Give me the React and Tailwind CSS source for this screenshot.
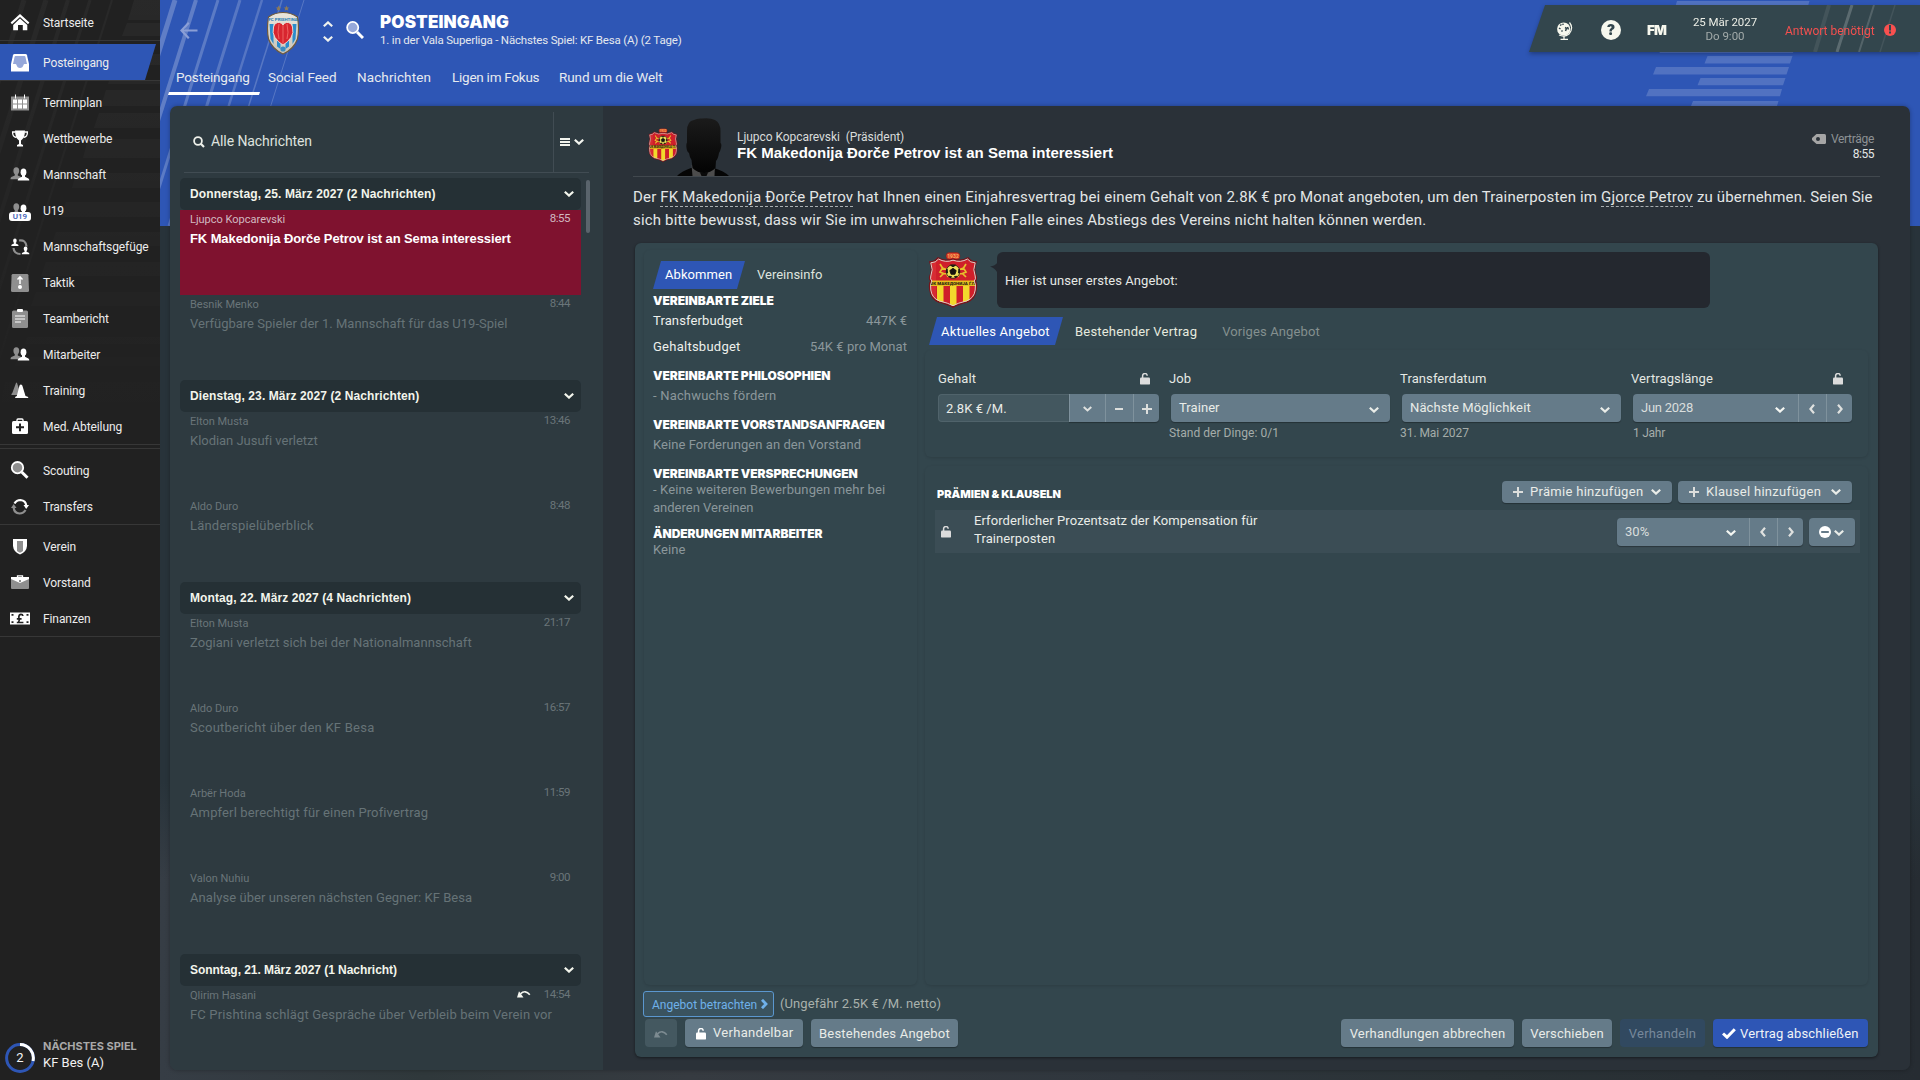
import React from 'react';

/* ---------- shared glyphs ---------- */
const Chevron = ({ className = 'w-[10px] h-[6px]' }) => (
  <svg viewBox="0 0 10 6" className={className} fill="none" stroke="currentColor" strokeWidth="2.2">
    <path d="M0.8 0.8 L5 4.6 L9.2 0.8" />
  </svg>
);
const Arrow = ({ left = false, className = 'w-[6px] h-[10px]' }) => (
  <svg viewBox="0 0 6 10" className={className} fill="none" stroke="currentColor" strokeWidth="2.2">
    <path d={left ? 'M5 0.8 L1.4 5 L5 9.2' : 'M1 0.8 L4.6 5 L1 9.2'} />
  </svg>
);
const Plus = () => (
  <svg viewBox="0 0 10 10" className="w-[10px] h-[10px] text-[#dcdedc]" fill="currentColor">
    <path d="M4 0h2v4h4v2H6v4H4V6H0V4h4z" />
  </svg>
);
const Lock = ({ className = 'text-[#dcdcdc]' }) => (
  <svg viewBox="0 0 10 12" className={'w-[10px] h-[12px] ' + className}>
    <rect x="0" y="4.600" width="10" height="7" rx="1.200" fill="currentColor" />
    <path d="M2.600 5.500 V3 A2.300 2.300 0 0 1 7.200 2.700" fill="none" stroke="currentColor" strokeWidth="1.500" />
  </svg>
);
const Undo = ({ className }) => (
  <svg viewBox="0 0 14 8" className={'w-[14px] h-[8px] ' + className}>
    <path d="M0 7.400 L2 1.200 L6.500 7.400 Z" fill="currentColor" />
    <path d="M3.400 3.800 Q8.500 -0.600 12.800 4.800" fill="none" stroke="currentColor" strokeWidth="1.600" />
  </svg>
);

/* ---------- sidebar icons ---------- */
const G = '#8f8f8f';
const person = (x, y, fill) => (
  <g fill={fill} transform={`translate(${x} ${y})`}>
    <ellipse cx="5.5" cy="3.6" rx="2.9" ry="3.6" />
    <path d="M4 6h3v2.2l3.4 1.6q.9.5.9 2.2H-.3q0-1.700.9-2.200L4 8.200z" />
  </g>
);
const icons = {
  home: (
    <g fill="#fff">
      <path d="M10 1 L19.400 9.600 L18 11.200 L10 4 L2 11.200 L0.600 9.600 Z" />
      <path d="M10 5.600 L17.300 12 V17.200 H12.800 V12 H8 V17.200 H3.200 V12 Z" />
    </g>
  ),
  inbox: (
    <g>
      <path d="M4.500 1h11q1.200 0 1.500 1.200L19 11v7.500H1V11L3 2.200Q3.300 1 4.500 1z" fill="#fff" />
      <path d="M5.500 3h9q.8 0 .9.800L17 11h-2.500q-.7 0-1 1-.8 3-3.500 3t-3.500-3q-.3-1-1-1H3L4.600 3.800Q4.700 3 5.500 3z" fill="#96a8da" />
    </g>
  ),
  calendar: (
    <g>
      <path d="M1 3.500h18V17.500H1z" fill={G} />
      <path d="M5.500 1.500v4M14.500 1.500v4" stroke="#fff" strokeWidth="1" />
      <path d="M3 6.500h4v4H3zM8 6.500h4v4H8zM13 6.500h4v4h-4zM3 11.500h4v4H3zM8 11.500h4v4H8zM13 11.500h4v4h-4z" fill="#fff" />
    </g>
  ),
  trophy: (
    <g>
      <path d="M5 1.500h10q0 7-4 10V15l2 1v1.500H7V16l2-1v-3.500q-4-3-4-10z" fill="#fff" />
      <path d="M5.500 3H2.600q-.3 5 4 5.500M14.500 3h2.900q.3 5-4 5.500" fill="none" stroke="#fff" strokeWidth="1.300" />
    </g>
  ),
  people: (
    <g>
      {person(0.800, 2.200, G)}
      {person(8, 3.600, '#fff')}
    </g>
  ),
  cycle: (
    <g>
      <path d="M9 3.500q7-1 7.500 6M3.500 11q.5 6 7 6" fill="none" stroke={G} strokeWidth="2.200" />
      <g transform="translate(1.500 1.500) scale(.62)">{person(0, 0, '#fff')}</g>
      <g transform="translate(12 9.500) scale(.65)">{person(0, 0, '#fff')}</g>
    </g>
  ),
  tactics: (
    <g>
      <path d="M3 1h14q1.300 0 1.400 1.300L19 17.500q0 1.500-1.500 1.500h-15Q1 19 1 17.500L1.600 2.300Q1.700 1 3 1z" fill={G} />
      <circle cx="10" cy="14" r="2" fill="#fff" />
      <path d="M10 11V4.500M7.500 6.500L10 3.800l2.500 2.700" fill="none" stroke="#fff" strokeWidth="1.500" />
    </g>
  ),
  report: (
    <g>
      <path d="M3.500 1.500h13q1.500 0 1.500 1.500v14.500q0 1.500-1.500 1.500h-13Q2 19 2 17.500V3Q2 1.500 3.500 1.500z" fill={G} />
      <rect x="7" y="0" width="6" height="3" rx="1" fill="#fff" />
      <path d="M5 7h10M5 10h10M5 13h6" stroke="#fff" strokeWidth="1.200" />
    </g>
  ),
  cones: (
    <g>
      <path d="M6 2q.5-1 1 0L11 14H1.500q-.5-1 .8-2z" fill={G} />
      <path d="M9.500 4.500q1.400-2 2.800 0L15.500 15q3 .5 3 2H5q0-1.500 1.800-2z" fill="#fff" />
    </g>
  ),
  med: (
    <g>
      <path d="M7 4.500V3Q7 2 8 2h4q1 0 1 1v1.500" fill="none" stroke="#fff" strokeWidth="1.300" />
      <rect x="2" y="4" width="16" height="13" rx="1.500" fill="#fff" />
      <path d="M9 6.500h2v2.800h3v2h-3v3H9v-3H6v-2h3z" fill="#222" />
    </g>
  ),
  scout: (
    <g>
      <circle cx="7.500" cy="6.700" r="5.700" fill={G} stroke="#fff" strokeWidth="1.800" />
      <path d="M11.700 11L17.500 16.800" stroke="#fff" strokeWidth="3" />
    </g>
  ),
  transfer: (
    <g fill="none" strokeWidth="2.200">
      <path d="M4.500 6.500q2-3.500 6-3.500 5.500.5 5.800 6" stroke="#fff" />
      <path d="M13.500 8h5.500l-2.800 4z" fill="#fff" />
      <path d="M15.500 13q-2 3.500-6 3.500-5.500-.5-5.800-6" stroke={G} />
      <path d="M1 11h5.500L3.700 7z" fill={G} />
    </g>
  ),
  shield: (
    <g>
      <path d="M3 2h14v7q-.5 6-7 8.500Q3.500 15 3 9z" fill="#fff" />
      <path d="M7 4h6v10q-1.500 1-3 1.700Q8.500 15 7 14z" fill={G} />
    </g>
  ),
  case: (
    <g>
      <path d="M7.500 4V2.800h5V4" fill="none" stroke="#fff" strokeWidth="1.300" />
      <path d="M1 4.500h18V15q0 1-1 1H2q-1 0-1-1z" fill={G} />
      <path d="M1 4h18v2l-9 4-9-4z" fill="#fff" />
      <rect x="9" y="7" width="2" height="2" fill={G} />
    </g>
  ),
  money: (
    <g>
      <rect x="0" y="3.500" width="20" height="12" fill="#fff" />
      <path d="M1.500 5h2v1.800h-2zM16.500 5h2v1.800h-2zM1.500 12.200h2V14h-2zM16.500 12.200h2V14h-2z" fill="#222" />
      <path d="M6.800 13.500h6.600M8.500 13.500q1.300-3 .3-5.500Q9 5.300 11 5.300q1.700 0 1.900 1.700M6.800 9.900h4.800" fill="none" stroke="#222" strokeWidth="1.700" />
    </g>
  ),
};
const Ico = ({ n }) => (
  <span className="relative w-[20px] h-[20px] ml-[10px]">
    <svg viewBox="0 0 20 20" className="w-[20px] h-[20px]">
      {n === 'u19' ? icons.people : icons[n]}
    </svg>
    {n === 'u19' && (
      <span className="absolute -left-px top-[11px] w-[22px] h-[9px] rounded-[3px] bg-white text-[#3558b4] font-['Roboto'] font-medium text-[8px] leading-[9px] text-center">
        U19
      </span>
    )}
  </span>
);
const NavItem = ({ n, label }) => (
  <div className="flex items-center h-[36px]">
    <Ico n={n} />
    <span className="ml-[13px] tracking-[-0.090px]">{label}</span>
  </div>
);
const SidePattern = () => (
  <svg className="absolute inset-0 w-[160px] h-[440px]" viewBox="0 0 160 440" fill="none">
    <defs>
      <linearGradient id="sideFade" gradientUnits="userSpaceOnUse" x1="0" y1="0" x2="0" y2="430">
        <stop offset="0" stopColor="#fff" stopOpacity="0.035" />
        <stop offset="1" stopColor="#fff" stopOpacity="0" />
      </linearGradient>
    </defs>
    <path
      fill="url(#sideFade)"
      d="M134 0H160V20H128zM127 23H160V36H122zM117 54H160V65H114zM109 81H160V84H108zM106 90H160V106H101zM99 113H160V128H94zM88 139H160V158H83zM76 173H160V188H72zM66 202H160V217H61zM56 232H160V246H51zM46 262H160V276H41zM36 292H160V306H31zM27 337H160V344H25zM18 357H160V366H15zM5 382H160V406H0z"
    />
    <g stroke="url(#sideFade)">
      <path d="M24 0L-10 108" strokeWidth="5" />
      <path d="M46 0L-10 178" strokeWidth="5" />
      <path d="M68 0L-10 248" strokeWidth="4" />
      <path d="M90 0L-10 318" strokeWidth="3" />
      <path d="M112 0L-10 388" strokeWidth="2" />
    </g>
  </svg>
);
const Sidebar = () => (
  <aside className="relative w-[160px] h-[1080px] shrink-0 bg-[#212121] text-[#ececec] text-[12px] leading-[20px] flex flex-col">
    <SidePattern />
    <div className="relative h-[41px] pt-[5px] border-b border-[#373737]">
      <NavItem n="home" label="Startseite" />
    </div>
    <div className="relative h-[40px] pt-[3px] border-b border-[#373737]">
      <div className="w-[156px] h-[36px] pt-px bg-[#2e56b5] [clip-path:polygon(0_0,100%_0,145px_100%,0_100%)]">
        <NavItem n="inbox" label="Posteingang" />
      </div>
    </div>
    <div className="relative mt-[4px] pb-0 border-b border-[#373737]">
      <NavItem n="calendar" label="Terminplan" />
      <NavItem n="trophy" label="Wettbewerbe" />
      <NavItem n="people" label="Mannschaft" />
      <NavItem n="u19" label="U19" />
      <NavItem n="cycle" label="Mannschaftsgefüge" />
      <NavItem n="tactics" label="Taktik" />
      <NavItem n="report" label="Teambericht" />
      <NavItem n="people" label="Mitarbeiter" />
      <NavItem n="cones" label="Training" />
      <div className="h-[35px]"><NavItem n="med" label="Med. Abteilung" /></div>
    </div>
    <div className="relative mt-[3px] pt-[4px] border-y border-[#373737]">
      <NavItem n="scout" label="Scouting" />
      <div className="h-[35px]"><NavItem n="transfer" label="Transfers" /></div>
    </div>
    <div className="relative pt-[4px] border-b border-[#373737]">
      <NavItem n="shield" label="Verein" />
      <NavItem n="case" label="Vorstand" />
      <div className="h-[35px]"><NavItem n="money" label="Finanzen" /></div>
    </div>
    <div className="mt-auto mb-[4px] flex items-start h-[36px]">
      <div className="relative w-[30px] h-[36px] ml-[5px]">
        <svg viewBox="0 0 30 36" className="w-[30px] h-[36px]" fill="none" strokeWidth="3">
          <circle cx="15" cy="18" r="13.400" stroke="#2e56b5" />
          <path d="M15 4.600 A13.400 13.400 0 0 1 28 21" stroke="#fff" />
        </svg>
        <span className="absolute inset-0 text-center text-[13px] leading-[36px] text-[#f5f5f5]">2</span>
      </div>
      <div className="ml-[8px] -mt-px flex flex-col">
        <span className="font-['Inter'] font-bold text-[11px] leading-[15px] text-[#a9a9a9]">NÄCHSTES SPIEL</span>
        <span className="text-[13px] leading-[17px] text-[#f2f2f2]">KF Bes (A)</span>
      </div>
    </div>
  </aside>
);

/* ---------- crests ---------- */
const PrishtinaCrest = () => (
  <svg viewBox="0 0 34 50" className="w-[34px] h-[50px]">
    <defs>
      <linearGradient id="pr" x1="0" x2="0" y1="0" y2="1">
        <stop offset="0" stopColor="#e9e6dc" />
        <stop offset="1" stopColor="#c9c4b8" />
      </linearGradient>
    </defs>
    <path d="M12.500 0.500l.8 1.900 2 .1-1.500 1.300.5 2-1.800-1.100-1.800 1.100.5-2-1.500-1.300 2-.1zM20.500 0.500l.8 1.900 2 .1-1.500 1.300.5 2-1.800-1.100-1.800 1.100.5-2-1.500-1.300 2-.1z" fill="#8d7a58" />
    <path d="M2.500 12Q9 7.500 17 7.500T31.500 12Q33.500 24 31.500 34 28 44 17 49 6 44 2.500 34 .5 24 2.500 12z" fill="url(#pr)" stroke="#6f5a3c" strokeWidth="1.200" />
    <path d="M3.500 19h4v20l-3-5zM26.500 19h4l-1 15-3 5zM11 18h3.500v26L11 41.500zM19.500 18H23v23.500L19.500 44z" fill="#2b8ccb" />
    <path d="M7.500 22q1.500-5 6-4.500 2.300.4 3.500 2.500 1.200-2.100 3.500-2.500 4.500-.5 6 4.500 1.500 6-1.500 10.500-3 4.500-8 7.500-5-3-8-7.500-3-4.500-1.500-10.500z" fill="#d8262f" stroke="#ece5dc" strokeWidth=".9" />
    <path d="M17 20v19M13 19q-2 9 0 15M21 19q2 9 0 15" stroke="#f06a68" strokeWidth=".9" fill="none" />
    <circle cx="17" cy="44" r="2.600" fill="#3b8bc0" />
    <text x="17" y="15.500" textAnchor="middle" fontSize="4.400" fontWeight="700" fontFamily="Roboto" fill="#2478b4">FC PRISHTINA</text>
  </svg>
);
const MakedonijaCrest = ({ className }) => (
  <svg viewBox="0 0 50 57" className={className}>
    <defs>
      <clipPath id="mkBody">
        <path d="M2 10q5 0 8-4 7 4 15 1 8 3 15-1 3 4 8 4-3 8 0 14 1 3-1 5 2 3 1 9-1 9-9 12-9 2-14 5-5-3-14-5-8-3-9-12-1-6 1-9-2-2-1-5 3-6 0-14z" />
      </clipPath>
    </defs>
    <rect x="18" y="0.500" width="14" height="7" rx="3.500" fill="#d9402c" stroke="#7d1d18" strokeWidth=".6" />
    <text x="25" y="5.800" textAnchor="middle" fontSize="5" fontWeight="700" fontFamily="Roboto" fill="#f7b05a">1932</text>
    <g clipPath="url(#mkBody)">
      <rect width="50" height="57" fill="#cf1f2a" />
      <path d="M0 0h8v57H0z" fill="#e03a3c" opacity=".5" />
      <path d="M9 34h6.500v22H9zM22 34h6.500v23H22zM35 34h6.500v22H35z" fill="#f2d92c" />
      <rect x="0" y="28.500" width="50" height="5.500" fill="#e6c01f" />
    </g>
    <g fill="none" stroke="#e6bf2c" strokeWidth="1.700">
      <path d="M12 12l2.500 4-2.500 4 3.500 1.500-3.500 3.500M14.500 16l4 1.500M15.500 21.500l3.500.5 1 3" />
      <path d="M38 12l-2.500 4 2.500 4-3.500 1.500 3.500 3.500M35.500 16l-4 1.500M34.500 21.500l-3.500.5-1 3" />
    </g>
    <circle cx="25" cy="19.500" r="6.800" fill="#eee05a" stroke="#201c14" strokeWidth=".8" />
    <path d="M25 16.300l3.200 2.300-1.300 3.700h-3.800l-1.300-3.700zM22.500 13.300h5l-2.500 1.500zM19 17l.6 4-1.200-.6zM31 17l-.6 4 1.200-.6zM21 24.300l2.500.2-1 1.300zM29 24.300l-2.500.2 1 1.300z" fill="#17140f" stroke="#17140f" strokeWidth=".9" />
    <text x="25" y="33" textAnchor="middle" fontSize="4.400" fontWeight="900" fontFamily="Roboto" fill="#2a2110">ФК МАКЕДОНИЈА Ѓ.П.</text>
    <path d="M2 10q5 0 8-4 7 4 15 1 8 3 15-1 3 4 8 4-3 8 0 14 1 3-1 5 2 3 1 9-1 9-9 12-9 2-14 5-5-3-14-5-8-3-9-12-1-6 1-9-2-2-1-5 3-6 0-14z" fill="none" stroke="#7a1219" strokeWidth="1.600" />
    <path d="M2.800 10.800q5 0 7.700-3.800 7 4 14.500 1.200 7.500 2.800 14.500-1.200 2.700 3.800 7.700 3.800-2.800 7.200 0 13.200 1 3-1 5 2 3 1 9-1 8.200-8.700 11-8.800 2-13.500 4.700Q20.300 51 11.500 49 3.800 46.200 2.800 38q-1-6 1-9-2-2-1-5 2.800-6 0-13.200z" fill="none" stroke="#e0d0c8" strokeWidth="1" />
  </svg>
);
const Silhouette = () => (
  <svg viewBox="0 0 52 58" className="w-[52px] h-[58px]">
    <defs>
      <linearGradient id="headShade" x1="0" x2="0" y1="0" y2="1">
        <stop offset="0" stopColor="#1b1b1b" />
        <stop offset="1" stopColor="#030303" />
      </linearGradient>
    </defs>
    <path d="M0 58q5-5 14-8h23q10 3 15 8z" fill="#050505" />
    <path d="M14.500 47L15.500 58h22L38 47l-11 6z" fill="#4c4c4c" />
    <path d="M23 54.500h8l-1.500 3.500h-5z" fill="#0a0a0a" />
    <path d="M10 13Q10 3 17 2q3-2 8-1.500Q33-.5 38 2q6 3 5.500 13v10q1.500 1 .5 5t-2 5q-1 6-3 8l-.5 7q-5 5-11.500 5t-11.500-5l-1-8q-2-3-2.500-7-2-1-2.500-5t.5-5.500z" fill="url(#headShade)" />
  </svg>
);

/* ---------- top header ---------- */
const HeaderArt = () => (
  <svg className="absolute left-0 top-0 w-[1760px] h-[226px]" viewBox="160 0 1760 226">
    <rect x="160" y="0" width="1760" height="226" fill="#2e56b5" />
    <g stroke="#fff" fill="none">
      <path d="M175 0L155 64" strokeWidth="5" opacity=".24" />
      <path d="M196 0L125 226" strokeWidth="4" opacity=".24" />
      <path d="M218 0L147 226" strokeWidth="3" opacity=".22" />
      <path d="M240 0L169 226" strokeWidth="3" opacity=".2" />
      <path d="M262 0L191 226" strokeWidth="2.500" opacity=".19" />
      <path d="M282 0L211 226" strokeWidth="1.500" opacity=".2" />
      <path d="M304 0L233 226" strokeWidth="1" opacity=".2" />
    </g>
    <path
      fill="#fff"
      fillOpacity=".17"
      d="M1677 1H1809.500L1808 6H1675.500zM1661 48H1794.500L1793 53H1659.500zM1707.500 56H1792.500L1790 63.500H1704.500zM1656 67H1789L1786.500 74.500H1653zM1700.500 78H1785.500L1783 85.200H1697.500zM1649 89H1782L1780 96.200H1646zM1693 101H1778.500L1777 106H1691z"
    />
  </svg>
);
const Tab = ({ children, active, className = '' }) => (
  <div className={'relative h-[28px] ' + className}>
    {children}
    {active && (
      <span className="absolute -left-[8px] top-[29px] w-[92px] h-[3px] bg-white [clip-path:polygon(1px_0,100%_0,91px_100%,0_100%)]" />
    )}
  </div>
);
const StatusBar = () => (
  <div className="ml-auto mt-[5px] w-[391px] h-[47px] drop-shadow-[0_2px_2px_rgba(0,0,0,0.3)]">
    <div className="relative w-full h-full flex items-center bg-[#33464d] [clip-path:polygon(16px_0,100%_0,100%_100%,0_100%)]">
      <svg className="absolute inset-0 w-[391px] h-[47px]" viewBox="0 0 391 47" stroke="#fff" fill="none">
        <path d="M300 0L286 47" strokeWidth="4" opacity=".08" />
        <path d="M323 0L308 47" strokeWidth="3" opacity=".2" />
        <path d="M345 0L330 47" strokeWidth="2" opacity=".16" />
        <path d="M366 0L351 47" strokeWidth="1.500" opacity=".08" />
      </svg>
      <svg viewBox="0 0 17 20" className="relative w-[17px] h-[20px] ml-[27px] mt-[4px]" fill="none">
        <circle cx="7.700" cy="8" r="6.600" fill="#f7f8ee" />
        <path d="M13.500 1.500Q18 7 13 13 8.500 16.500 3 14" stroke="#f7f8ee" strokeWidth="1.200" />
        <path d="M8 15v3M4.500 18.400h7.500" stroke="#f7f8ee" strokeWidth="1.300" />
        <path d="M4 4.500l1.500-1M6.500 2.800l1 1M3 7l1.500 1M5.500 9.500l1 1M9 6.500l1.500.8L9.500 10M11.500 6l1 2.500" stroke="#33464d" strokeWidth="1.500" />
      </svg>
      <span className="relative ml-[28px] mt-[2px] w-[20px] h-[20px] rounded-full bg-[#f7f8ee] text-[#33464d] font-['Inter'] font-black text-[14px] leading-[20px] text-center">?</span>
      <span className="relative ml-[26px] w-[22px] text-[#f7f8ee] font-['Inter'] font-black text-[13.500px] leading-[20px] tracking-[-0.900px] mt-[3px]">FM</span>
      <div className="relative ml-[23px] w-[66px] flex flex-col text-center text-[12px] leading-[14px] mt-px">
        <span className="text-[#eceee6] text-[11.500px] tracking-[-0.050px] whitespace-nowrap">25 Mär 2027</span>
        <span className="text-[#a3abaa] text-[11.500px]">Do 9:00</span>
      </div>
      <span className="relative ml-[27px] mt-[5px] text-[12px] text-[#f4504f] whitespace-nowrap">Antwort benötigt</span>
      <span className="relative ml-[9px] mt-[2px] w-[12px] h-[12px] rounded-full bg-[#f9504f] flex items-center justify-center">
        <svg viewBox="0 0 4 9" className="w-[4px] h-[9px]" fill="#33464d"><path d="M1 0h2v5.400H1zM1 6.600h2v2H1z" /></svg>
      </span>
    </div>
  </div>
);
const Header = () => (
  <header className="relative h-[106px] flex flex-col">
    <div className="flex h-[63px]">
      <svg viewBox="0 0 18 18" className="w-[18px] h-[18px] ml-[20px] mt-[21px]" fill="none" stroke="#8b9fd6" strokeWidth="2.200">
        <path d="M17.500 9.500H1.800M8.800 1.700L1.500 9.500l7.300 7.800" />
      </svg>
      <div className="ml-[68px] mt-[5px]"><PrishtinaCrest /></div>
      <div className="ml-[23px] mt-[21px] flex flex-col gap-[9px] text-[#eef1ee]">
        <Chevron className="w-[10px] h-[6px] rotate-180" />
        <Chevron />
      </div>
      <svg viewBox="0 0 18 18" className="w-[18px] h-[18px] ml-[13px] mt-[21px]">
        <circle cx="6.700" cy="6.500" r="5.600" fill="#96a8da" stroke="#fff" strokeWidth="1.700" />
        <path d="M11 11l6 6" stroke="#fff" strokeWidth="3" />
      </svg>
      <div className="ml-[16px] mt-[12px] flex flex-col">
        <span className="font-['Inter'] font-black text-[17px] leading-[20px] tracking-[0.150px] text-white">POSTEINGANG</span>
        <span className="text-[11.500px] leading-[16px] tracking-[-0.180px] text-[#e4e8ee] whitespace-nowrap">
          1. in der Vala Superliga - Nächstes Spiel: KF Besa (A) (2 Tage)
        </span>
      </div>
      <StatusBar />
    </div>
    <nav className="flex pl-[16px] gap-[21px] text-[13.500px] leading-[29px] tracking-[-0.080px] text-[#e6eaef] whitespace-nowrap">
      <Tab active className="w-[71px] tracking-[-0.150px]">Posteingang</Tab>
      <Tab className="w-[68px]">Social Feed</Tab>
      <Tab className="w-[74px] tracking-[0.100px]">Nachrichten</Tab>
      <Tab className="w-[86px] tracking-[-0.250px]">Ligen im Fokus</Tab>
      <Tab>Rund um die Welt</Tab>
    </nav>
  </header>
);

/* ---------- message list ---------- */
const groups = [
  {
    title: 'Donnerstag, 25. März 2027 (2 Nachrichten)',
    items: [
      { from: 'Ljupco Kopcarevski', time: '8:55', subject: 'FK Makedonija Đorče Petrov ist an Sema interessiert', active: true },
      { from: 'Besnik Menko', time: '8:44', subject: 'Verfügbare Spieler der 1. Mannschaft für das U19-Spiel', track: 'tracking-[0.010px]' },
    ],
  },
  {
    title: 'Dienstag, 23. März 2027 (2 Nachrichten)',
    items: [
      { from: 'Elton Musta', time: '13:46', subject: 'Klodian Jusufi verletzt', track: 'tracking-[-0.030px]' },
      { from: 'Aldo Duro', time: '8:48', subject: 'Länderspielüberblick', track: 'tracking-[0.200px]' },
    ],
  },
  {
    title: 'Montag, 22. März 2027 (4 Nachrichten)',
    items: [
      { from: 'Elton Musta', time: '21:17', subject: 'Zogiani verletzt sich bei der Nationalmannschaft', track: 'tracking-[0.050px]' },
      { from: 'Aldo Duro', time: '16:57', subject: 'Scoutbericht über den KF Besa', track: 'tracking-[0.240px]' },
      { from: 'Arbër Hoda', time: '11:59', subject: 'Ampferl berechtigt für einen Profivertrag', track: 'tracking-[0.130px]' },
      { from: 'Valon Nuhiu', time: '9:00', subject: 'Analyse über unseren nächsten Gegner: KF Besa', track: 'tracking-[0.070px]' },
    ],
  },
  {
    title: 'Sonntag, 21. März 2027 (1 Nachricht)',
    narrow: true,
    items: [
      {
        from: 'Qlirim Hasani',
        time: '14:54',
        subject: 'FC Prishtina schlägt Gespräche über Verbleib beim Verein vor',
        reply: true,
        track: 'tracking-[0.150px]',
      },
    ],
  },
];
const Message = ({ m }) => (
  <div className={'h-[85px] pl-[10px] pr-[11px] whitespace-nowrap ' + (m.active ? 'bg-[#7f122f]' : '')}>
    <div className="flex h-[18px] text-[11px]">
      <span className={'leading-[19px] ' + (m.active ? 'text-[#d1b9c0]' : 'text-[#6a7579]')}>{m.from}</span>
      <span className="ml-auto mt-[4px]">{m.reply && <Undo className="mr-[13px] text-[#f4f6f0]" />}</span>
      <span className={'leading-[16px] text-[11.500px] tracking-[-0.500px] ' + (m.active ? 'text-[#d1b9c0]' : 'text-[#6a7579]')}>{m.time}</span>
    </div>
    {m.active ? (
      <div className="font-['Liberation_Sans'] font-bold text-[13px] leading-[21px] tracking-[-0.100px] text-white">{m.subject}</div>
    ) : (
      <div className={'text-[13px] leading-[21px] text-[#667377] ' + m.track}>{m.subject}</div>
    )}
  </div>
);
const MessageList = () => (
  <section className="w-[433px] h-full bg-[#2e3a40] flex flex-col">
    <div className="flex h-[67px] ml-[14px] w-[405px] border-b border-[#414c53]">
      <svg viewBox="0 0 12 12" className="w-[12px] h-[12px] ml-[9px] mt-[30px] text-[#eef0ea]" fill="none" stroke="currentColor">
        <circle cx="5" cy="5" r="3.900" strokeWidth="1.800" />
        <path d="M7.800 7.800L11 11" strokeWidth="2.200" />
      </svg>
      <span className="ml-[6px] mt-[25px] text-[14px] leading-[21px] tracking-[-0.090px] text-[#dfe2df]">Alle Nachrichten</span>
      <div className="ml-auto mt-[6px] w-[36px] h-[60px] border-l border-[#414c53] flex items-center pl-[6px] gap-[4px] text-[#f2f4ee]">
        <svg viewBox="0 0 10 8" className="w-[10px] h-[8px]" fill="currentColor"><path d="M0 0h10v2H0zM0 3h10v2H0zM0 6h10v2H0z" /></svg>
        <Chevron />
      </div>
    </div>
    <div className="flex mt-[5px] ml-[10px]">
      <div className="w-[401px]">
        {groups.map((g) => (
          <div key={g.title}>
            <div className="flex items-center h-[32px] rounded-[5px] bg-[#253035] pl-[10px] pr-[7px] text-[#f3f5ec]">
              <span className={"font-['Liberation_Sans'] font-bold text-[12px] leading-[32px] " + (g.narrow ? 'tracking-[-0.050px]' : 'tracking-[0.100px]')}>
                {g.title}
              </span>
              <Chevron className="w-[10px] h-[6px] ml-auto" />
            </div>
            {g.items.map((m) => (
              <Message key={m.from + m.time} m={m} />
            ))}
          </div>
        ))}
      </div>
      <div className="ml-[5px] mt-[2px] w-[4px] h-[53px] rounded-full bg-[#5a646c]" />
    </div>
  </section>
);

/* ---------- offer panel ---------- */
const Heading = ({ children, className = 'mt-[9px]' }) => (
  <h3 className={"font-['Inter'] font-black text-[12px] leading-[16px] tracking-[-0.060px] text-white whitespace-nowrap " + className}>{children}</h3>
);
const ActiveTab = ({ children, className }) => (
  <span className={'h-[28px] pl-[12px] bg-[#2e56b5] text-white [clip-path:polygon(8px_0,100%_0,calc(100%-8px)_100%,0_100%)] ' + className}>{children}</span>
);
const Agreements = () => (
  <section className="w-[273px] h-full rounded-[6px] pl-[9px] pr-[10px] pt-[11px] text-[13px] tracking-[0.060px] whitespace-nowrap shadow-[0_1px_3px_rgba(0,0,0,0.12)]">
    <div className="flex text-[13px] leading-[28px] text-[#dfe4df]">
      <ActiveTab className="w-[92px]">Abkommen</ActiveTab>
      <span className="ml-[12px] tracking-normal">Vereinsinfo</span>
    </div>
    <Heading className="mt-[4px]">VEREINBARTE ZIELE</Heading>
    <div className="flex justify-between leading-[23px] h-[24px]">
      <span className="text-[#eef0ec] tracking-[0.120px]">Transferbudget</span>
      <span className="text-[#8b979b]">447K €</span>
    </div>
    <div className="flex justify-between leading-[27px] h-[26px]">
      <span className="text-[#eef0ec] tracking-[0.250px]">Gehaltsbudget</span>
      <span className="text-[#8b979b]">54K € pro Monat</span>
    </div>
    <Heading>VEREINBARTE PHILOSOPHIEN</Heading>
    <p className="h-[24px] leading-[23px] tracking-[0.180px] text-[#8b979b]">- Nachwuchs fördern</p>
    <Heading>VEREINBARTE VORSTANDSANFRAGEN</Heading>
    <p className="h-[24px] leading-[23px] text-[#8b979b]">Keine Forderungen an den Vorstand</p>
    <Heading>VEREINBARTE VERSPRECHUNGEN</Heading>
    <p className="-mt-px leading-[18px] tracking-[0.130px] text-[#8b979b]">
      - Keine weiteren Bewerbungen mehr bei
      <br />
      <span className="tracking-normal">anderen Vereinen</span>
    </p>
    <Heading>ÄNDERUNGEN MITARBEITER</Heading>
    <p className="-mt-px leading-[18px] text-[#8b979b]">Keine</p>
  </section>
);
const Step = ({ children, className = '' }) => (
  <span className={'h-full flex items-center justify-center border-l border-[#7f929d] text-[#dfe1df] ' + className}>{children}</span>
);
const btn = 'flex items-center rounded-[4px] bg-[#657b89] text-[#e9ece8] shadow-[0_1px_1px_rgba(0,0,0,0.3)] whitespace-nowrap ';
const Field = ({ label, lock, note, noteClass = '', children }) => (
  <div className="w-[231px] flex flex-col">
    <div className="flex items-center h-[20px] text-[#e6e9e4]">
      <span className="w-[202px] tracking-[0.100px]">{label}</span>
      {lock && <Lock />}
    </div>
    <div className="mt-[5px] h-[28px]">{children}</div>
    <span className={'mt-[3px] text-[12px] leading-[16px] text-[#a5adaa] ' + noteClass}>{note}</span>
  </div>
);
const Terms = () => (
  <div className="mt-[5px] h-[107px] rounded-[6px] pl-[13px] pt-[19px] flex shadow-[0_1px_3px_rgba(0,0,0,0.12)]">
    <Field label="Gehalt" lock>
      <div className="flex w-[221px] h-[28px] text-[#e9ece8]">
        <span className="w-[131px] h-[28px] leading-[27px] pl-[7px] rounded-l-[4px] bg-[#43575f] border border-r-0 border-[#50636b]">2.8K € /M.</span>
        <span className={btn + 'rounded-l-none w-[90px] h-[28px]'}>
          <Step className="w-[36px]"><Chevron className="w-[9px] h-[6px] mt-[2px]" /></Step>
          <Step className="w-[28px]"><span className="w-[8px] h-[2px] mt-[2px] mr-[2px] bg-[#dcdedc]" /></Step>
          <Step className="w-[26px] pt-[2px]"><Plus /></Step>
        </span>
      </div>
    </Field>
    <Field label="Job" note="Stand der Dinge: 0/1" noteClass="tracking-[0.050px]">
      <div className={btn + 'ml-[2px] w-[219px] h-[28px] pl-[8px] pr-[11px] justify-between'}>Trainer<Chevron className="w-[10px] h-[6px] mt-[4px]" /></div>
    </Field>
    <Field label="Transferdatum" note="31. Mai 2027" noteClass="tracking-[-0.050px]">
      <div className={btn + 'ml-[2px] w-[219px] h-[28px] pl-[8px] pr-[11px] justify-between'}><span className="tracking-[0.120px]">Nächste Möglichkeit</span><Chevron className="w-[10px] h-[6px] mt-[4px]" /></div>
    </Field>
    <Field label="Vertragslänge" lock note="1 Jahr" noteClass="ml-[2px] tracking-[-0.250px]">
      <div className={btn + 'ml-[2px] w-[219px] h-[28px]'}>
        <span className="flex items-center justify-between w-[165px] pl-[8px] pr-[13px] tracking-[-0.250px] text-[#d9dedd]">Jun 2028<Chevron className="w-[10px] h-[6px] mt-[4px] text-[#f4f6f2]" /></span>
        <Step className="w-[28px] pt-[2px] pr-[2px]"><Arrow left /></Step>
        <Step className="w-[26px] pt-[2px]"><Arrow /></Step>
      </div>
    </Field>
  </div>
);
const Clauses = () => (
  <div className="mt-[9px] flex-1 rounded-[6px] pt-[15px] shadow-[0_1px_3px_rgba(0,0,0,0.12)]">
    <div className="flex items-center pl-[12px] pr-[16px] h-[22px] tracking-[0.300px]">
      <h3 className="font-['Inter'] font-black text-[11px] leading-[16px] tracking-normal text-white mt-[4px]">PRÄMIEN &amp; KLAUSELN</h3>
      <button className={btn + 'ml-auto w-[170px] h-[22px] pl-[11px] pr-[11px]'}>
        <Plus /><span className="ml-[7px] -mt-px">Prämie hinzufügen</span><Chevron className="w-[10px] h-[6px] ml-auto" />
      </button>
      <button className={btn + 'ml-[6px] w-[174px] h-[22px] pl-[11px] pr-[11px]'}>
        <Plus /><span className="ml-[7px] -mt-px">Klausel hinzufügen</span><Chevron className="w-[10px] h-[6px] ml-auto" />
      </button>
    </div>
    <div className="mt-[7px] ml-[10px] w-[925px] h-[43px] bg-[#3b4d55] flex items-center">
      <Lock className="ml-[6px] text-[#dcdcdc]" />
      <p className="ml-[23px] -mt-[3px] leading-[18px] tracking-[0.100px] text-[#e9ece8]">
        Erforderlicher Prozentsatz der Kompensation für
        <br />
        Trainerposten
      </p>
      <div className={btn + 'ml-auto w-[186px] h-[28px]'}>
        <span className="flex items-center justify-between w-[132px] pl-[8px] pr-[13px] text-[#d9dedd]">30%<Chevron className="w-[10px] h-[6px] mt-[3px] text-[#f4f6f2]" /></span>
        <Step className="w-[28px] pr-[2px]"><Arrow left /></Step>
        <Step className="w-[26px]"><Arrow /></Step>
      </div>
      <button className={btn + 'ml-[6px] mr-[5px] w-[46px] h-[28px] pl-[10px] gap-[3px]'}>
        <svg viewBox="0 0 12 12" className="w-[12px] h-[12px] mt-px"><circle cx="6" cy="6" r="6" fill="#fff" /><rect x="2.200" y="5" width="7.600" height="2" fill="#657b89" /></svg>
        <Chevron className="w-[10px] h-[6px] mt-[2px]" />
      </button>
    </div>
  </div>
);
const Offer = () => (
  <section className="ml-[8px] w-[943px] h-full flex flex-col text-[13px] tracking-[0.060px]">
    <div className="mt-[2px] flex h-[56px]">
      <MakedonijaCrest className="ml-[3px] w-[50px] h-[57px]" />
      <div className="relative ml-[19px] w-[713px] h-[56px] rounded-[6px] bg-[#24282f] pl-[8px] leading-[57px] text-[#e6e9e6]">
        <svg viewBox="0 0 8 10" className="absolute -left-[7px] top-[10px] w-[8px] h-[10px]" fill="#24282f"><path d="M8 0Q5 4 0 4.500 5 6 7 10h1z" /></svg>
        Hier ist unser erstes Angebot:
      </div>
    </div>
    <div className="mt-[9px] ml-[4px] flex leading-[29px] h-[28px] text-[13px] tracking-[0.200px] whitespace-nowrap text-[#e6eadf]">
      <ActiveTab className="w-[134px]">Aktuelles Angebot</ActiveTab>
      <span className="ml-[12px]">Bestehender Vertrag</span>
      <span className="ml-[25px] tracking-[0.120px] text-[#84908f]">Voriges Angebot</span>
    </div>
    <Terms />
    <Clauses />
  </section>
);
const Actions = () => (
  <>
    <div className="flex mt-[6px] h-[26px] ml-[8px]">
      <button className="w-[131px] h-[26px] rounded-[3px] border border-[#5b97cf] bg-[#3a535f] text-[#6fb1ea] text-[12px] leading-[26px] flex items-center pl-[8px] whitespace-nowrap">
        <span className="mt-[2px]">Angebot betrachten</span>
        <svg viewBox="0 0 7 10" className="w-[7px] h-[10px] ml-[4px]" fill="none" stroke="currentColor" strokeWidth="2.800"><path d="M1 .8L5 5 1 9.200" /></svg>
      </button>
      <span className="ml-[6px] text-[13px] leading-[25px] tracking-[0.100px] text-[#a9b1ac]">(Ungefähr 2.5K € /M. netto)</span>
    </div>
    <div className="flex mt-[2px] ml-[10px] mr-[10px] h-[28px] text-[13px] leading-[28px] tracking-[0.200px]">
      <button className="w-[32px] h-[28px] rounded-[4px] bg-[#445860] flex items-center justify-center pt-[2px]"><Undo className="text-[#7d8b91]" /></button>
      <button className={btn + 'ml-[8px] w-[118px] pl-[11px] pb-px'}><Lock className="text-white mt-[3px]" /><span className="ml-[7px] tracking-[0.300px]">Verhandelbar</span></button>
      <button className={btn + 'ml-[8px] w-[147px] justify-center pt-px'}>Bestehendes Angebot</button>
      <button className={btn + 'ml-auto w-[173px] justify-center pt-px'}>Verhandlungen abbrechen</button>
      <button className={btn + 'ml-[8px] w-[90px] justify-center pt-px'}>Verschieben</button>
      <button className="ml-[8px] w-[85px] pt-px rounded-[4px] bg-[#314960] text-[#77889b] text-center">Verhandeln</button>
      <button className="ml-[8px] w-[155px] pt-px rounded-[4px] bg-[#2e56b5] text-[#f0f3f7] flex items-center pl-[9px] whitespace-nowrap shadow-[0_1px_1px_rgba(0,0,0,0.3)]">
        <svg viewBox="0 0 14 11" className="w-[14px] h-[11px]" fill="none" stroke="#fff" strokeWidth="3"><path d="M1 5.500l4 3.700L12.800 1.200" /></svg>
        <span className="ml-[4px] tracking-[0.150px]">Vertrag abschließen</span>
      </button>
    </div>
  </>
);

/* ---------- message detail ---------- */
const Term = ({ children }) => <span className="border-b border-dashed border-[#a8aeb0]">{children}</span>;
const Detail = () => (
  <section className="w-[1307px] h-full bg-[#2a3138] pl-[30px] flex flex-col">
    <div className="flex w-[1247px] h-[71px] border-b border-[#41484e]">
      <MakedonijaCrest className="w-[30px] h-[35px] ml-[15px] mt-[22px]" />
      <div className="mt-[12px] -ml-px"><Silhouette /></div>
      <div className="ml-[8px] mt-[24px] flex flex-col">
        <span className="text-[12px] leading-[15px] tracking-[-0.050px] text-[#d9dcdb] whitespace-pre">Ljupco Kopcarevski  (Präsident)</span>
        <span className="font-['Liberation_Sans'] font-bold text-[15px] leading-[16px] text-white">FK Makedonija Đorče Petrov ist an Sema interessiert</span>
      </div>
      <div className="ml-auto mr-[6px] mt-[26px] flex flex-col items-end text-[12px] leading-[15px]">
        <span className="flex items-center text-[#8d9194] tracking-[-0.300px]">
          <svg viewBox="0 0 14 10" className="w-[14px] h-[10px] mr-[5px] -mt-[2px]"><path d="M4.500 0H12.500Q14 0 14 1.500v7Q14 10 12.500 10H4.500L0 6Q-.3 5 0 4z" fill="#a5a5a5" /><circle cx="6" cy="5" r="2" fill="#2a3138" /></svg>
          Verträge
        </span>
        <span className="text-[#e4e7e7] tracking-[-0.500px]">8:55</span>
      </div>
    </div>
    <p className="mt-[9px] w-[1270px] text-[15px] leading-[23px] tracking-[0.170px] text-[#e3e6e6] whitespace-nowrap">
      Der <Term>FK Makedonija Đorče Petrov</Term> hat Ihnen einen Einjahresvertrag bei einem Gehalt von 2.8K € pro Monat angeboten, um den Trainerposten im <Term>Gjorce Petrov</Term> zu übernehmen. Seien Sie
      <br />
      sich bitte bewusst, dass wir Sie im unwahrscheinlichen Falle eines Abstiegs des Vereins nicht halten können werden.
    </p>
    <div className="mt-[11px] ml-[2px] w-[1243px] h-[814px] rounded-[6px] bg-[#33464d] shadow-[0_1px_3px_rgba(0,0,0,0.45)]">
      <div className="flex pt-[7px] pl-[9px] h-[742px]">
        <Agreements />
        <Offer />
      </div>
      <Actions />
    </div>
  </section>
);

export default function App() {
  return (
    <div className="flex w-[1920px] h-[1080px] overflow-hidden bg-[#28333a] font-['Roboto',sans-serif]">
      <Sidebar />
      <main className="relative w-[1760px] h-[1080px] bg-[linear-gradient(90deg,#363d45_0%,#2f383b_15%,#363b41_30%,#2f363d_55%,#2a3236_75%,#262c32_100%)]">
        <div className="absolute left-0 top-[226px] w-full h-[654px] bg-[linear-gradient(180deg,#28333a_85%,transparent)]" />
        <HeaderArt />
        <Header />
        <div className="relative flex ml-[10px] w-[1740px] h-[964px] rounded-[7px] overflow-hidden shadow-[0_0_4px_rgba(0,0,0,0.3)]">
          <MessageList />
          <Detail />
        </div>
      </main>
    </div>
  );
}
